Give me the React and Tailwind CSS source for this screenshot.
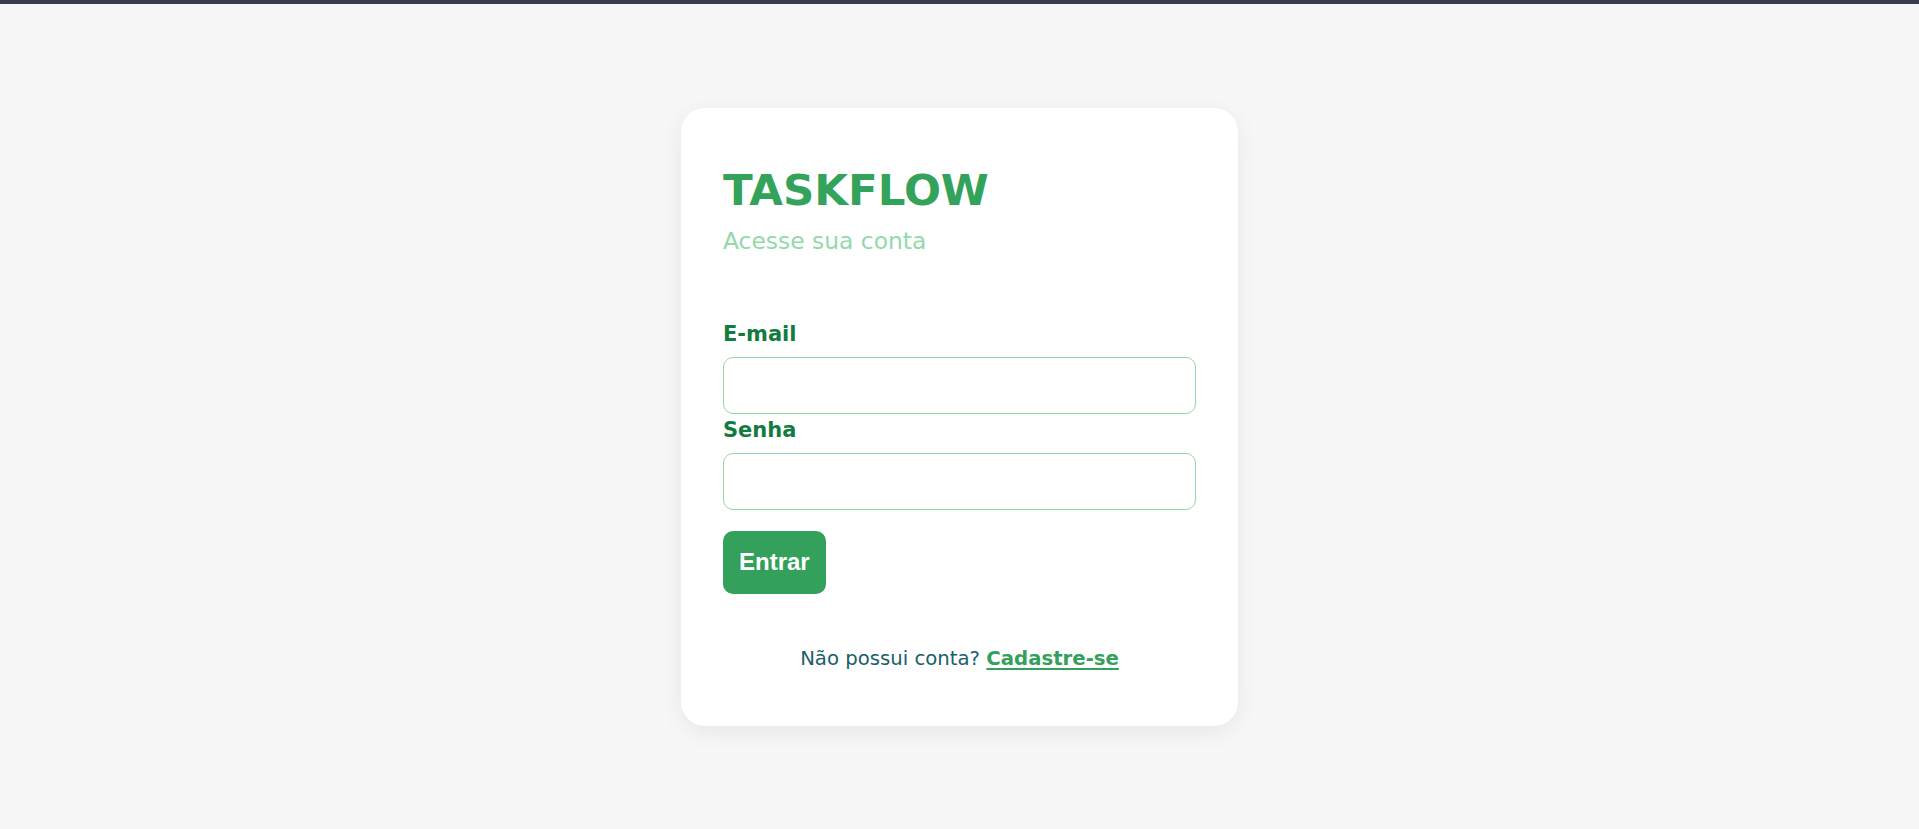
export default function App() {
    return (
        <div className="min-h-screen flex flex-col bg-[#f7f7f7] font-['DejaVu_Sans',sans-serif]">
            {/* top strip */}
            <div className="h-[4px] bg-[#3a3d4f]" />

            <main className="flex-1 flex items-center justify-center">
                <div className="w-[557px] bg-white rounded-[24px] shadow-[0_6px_24px_rgba(0,0,0,0.07)] px-[42px] pt-[56px] pb-[55px] flex flex-col">
                    <h1 className="text-[43.5px] leading-[52px] font-bold text-[#33a35b]">TASKFLOW</h1>
                    <p className="mt-[11px] text-[23.4px] leading-[28px] text-[#93d9a9]">Acesse sua conta</p>

                    <form className="mt-[67px] flex flex-col" onSubmit={(e) => e.preventDefault()}>
                        <label className="text-[21px] leading-[24px] font-bold text-[#137b40]">E-mail</label>
                        <input
                            type="email"
                            className="mt-[11px] h-[57px] w-full rounded-[10px] border border-[#93d9a9] bg-white px-3 outline-none"
                        />

                        <label className="mt-[4px] text-[21px] leading-[24px] font-bold text-[#137b40]">Senha</label>
                        <input
                            type="password"
                            className="mt-[11px] h-[57px] w-full rounded-[10px] border border-[#93d9a9] bg-white px-3 outline-none"
                        />

                        <div className="mt-[21px]">
                            <button
                                type="submit"
                                className="h-[63px] px-4 rounded-[10px] bg-[#33a05b] text-white text-[24px] font-bold font-['Liberation_Sans',Arial,sans-serif]"
                            >
                                Entrar
                            </button>
                        </div>
                    </form>

                    <p className="mt-[53px] text-center text-[19.7px] leading-[24px] text-[#1a5e6a]">
                        Não possui conta?{" "}
                        <a href="#" className="font-bold text-[#33a05b] underline decoration-[2px] underline-offset-[3px]">
                            Cadastre-se
                        </a>
                    </p>
                </div>
            </main>
        </div>
    );
}
